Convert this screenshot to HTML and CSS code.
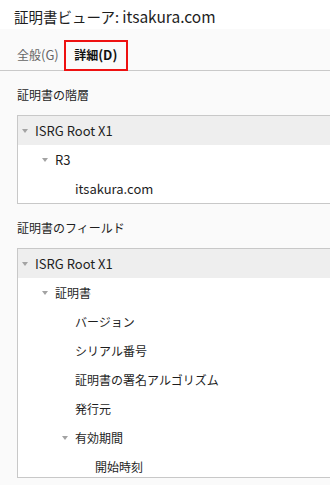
FILE: index.html
```html
<!DOCTYPE html>
<html lang="ja">
<head>
<meta charset="utf-8">
<link rel="stylesheet" href="styles.css">
</head>
<body>
<header class="title">証明書ビューア: <span class="lat">itsakura.com</span></header>
<nav class="tabs">
  <div class="tab">全般<span class="lat">(G)</span></div>
  <div class="tab active">詳細<span class="lat">(D)</span></div>
</nav>
<main class="content">
  <h2 class="heading">証明書の階層</h2>
  <div class="tree">
    <div class="row sel l0"><span class="tw"><i class="tri"></i></span><span class="lat">ISRG Root X1</span></div>
    <div class="row l1"><span class="tw"><i class="tri"></i></span><span class="lat">R3</span></div>
    <div class="row l2"><span class="tw"></span><span class="lat">itsakura.com</span></div>
  </div>
  <h2 class="heading">証明書のフィールド</h2>
  <div class="tree fields">
    <div class="row sel l0"><span class="tw"><i class="tri"></i></span><span class="lat">ISRG Root X1</span></div>
    <div class="row l1"><span class="tw"><i class="tri"></i></span>証明書</div>
    <div class="row l2"><span class="tw"></span>バージョン</div>
    <div class="row l2"><span class="tw"></span>シリアル番号</div>
    <div class="row l2"><span class="tw"></span>証明書の署名アルゴリズム</div>
    <div class="row l2"><span class="tw"></span>発行元</div>
    <div class="row l2"><span class="tw"><i class="tri"></i></span>有効期間</div>
    <div class="row l3"><span class="tw"></span>開始時刻</div>
  </div>
</main>
</body>
</html>
```

FILE: styles.css
```css
html, body {
  margin: 0;
  padding: 0;
}
body {
  background: #fafafa;
  font-family: "Noto Sans CJK JP", sans-serif;
  color: #1e1e1e;
  font-size: 12px;
  width: 330px;
  height: 485px;
  overflow: hidden;
}
.lat {
  font-size: 13px;
}
.title {
  background: #ffffff;
  height: 29px;
  box-sizing: border-box;
  padding: 3px 0 0 14px;
  line-height: 26px;
  font-size: 14.5px;
  white-space: nowrap;
}
.title .lat {
  font-size: 15.5px;
}
.tabs {
  display: flex;
  align-items: flex-end;
  height: 41px;
  border-bottom: 1px solid #c9c9c9;
  padding-left: 17px;
}
.tab {
  height: 31px;
  line-height: 30px;
  box-sizing: border-box;
  color: #666666;
  margin-bottom: -1px;
  margin-right: 5px;
  white-space: nowrap;
}
.tab.active {
  color: #111111;
  font-weight: bold;
  border: 2px solid #ee1111;
  width: 64px;
  text-align: center;
  line-height: 26px;
}
.content {
  padding-left: 17px;
}
.heading {
  margin: 0;
  font-size: 12px;
  font-weight: normal;
  line-height: 20px;
  padding: 14px 0 10px 0;
}
.tree {
  background: #ffffff;
  border: 1px solid #c8c8c8;
  border-right: none;
}
.tree.fields {
  height: 228px;
  overflow: hidden;
}
.row {
  height: 29px;
  display: flex;
  align-items: center;
  white-space: nowrap;
}
.row.sel {
  background: #eeeeee;
}
.l0 { padding-left: 4px; }
.l1 { padding-left: 24px; }
.l2 { padding-left: 44px; }
.l3 { padding-left: 64px; }
.tw {
  width: 12px;
  height: 29px;
  display: flex;
  align-items: center;
  flex: none;
  margin-right: 1px;
}
.tri {
  display: block;
  width: 0;
  height: 0;
  border-left: 3.5px solid transparent;
  border-right: 3.5px solid transparent;
  border-top: 4px solid #a3a3a3;
}
```
